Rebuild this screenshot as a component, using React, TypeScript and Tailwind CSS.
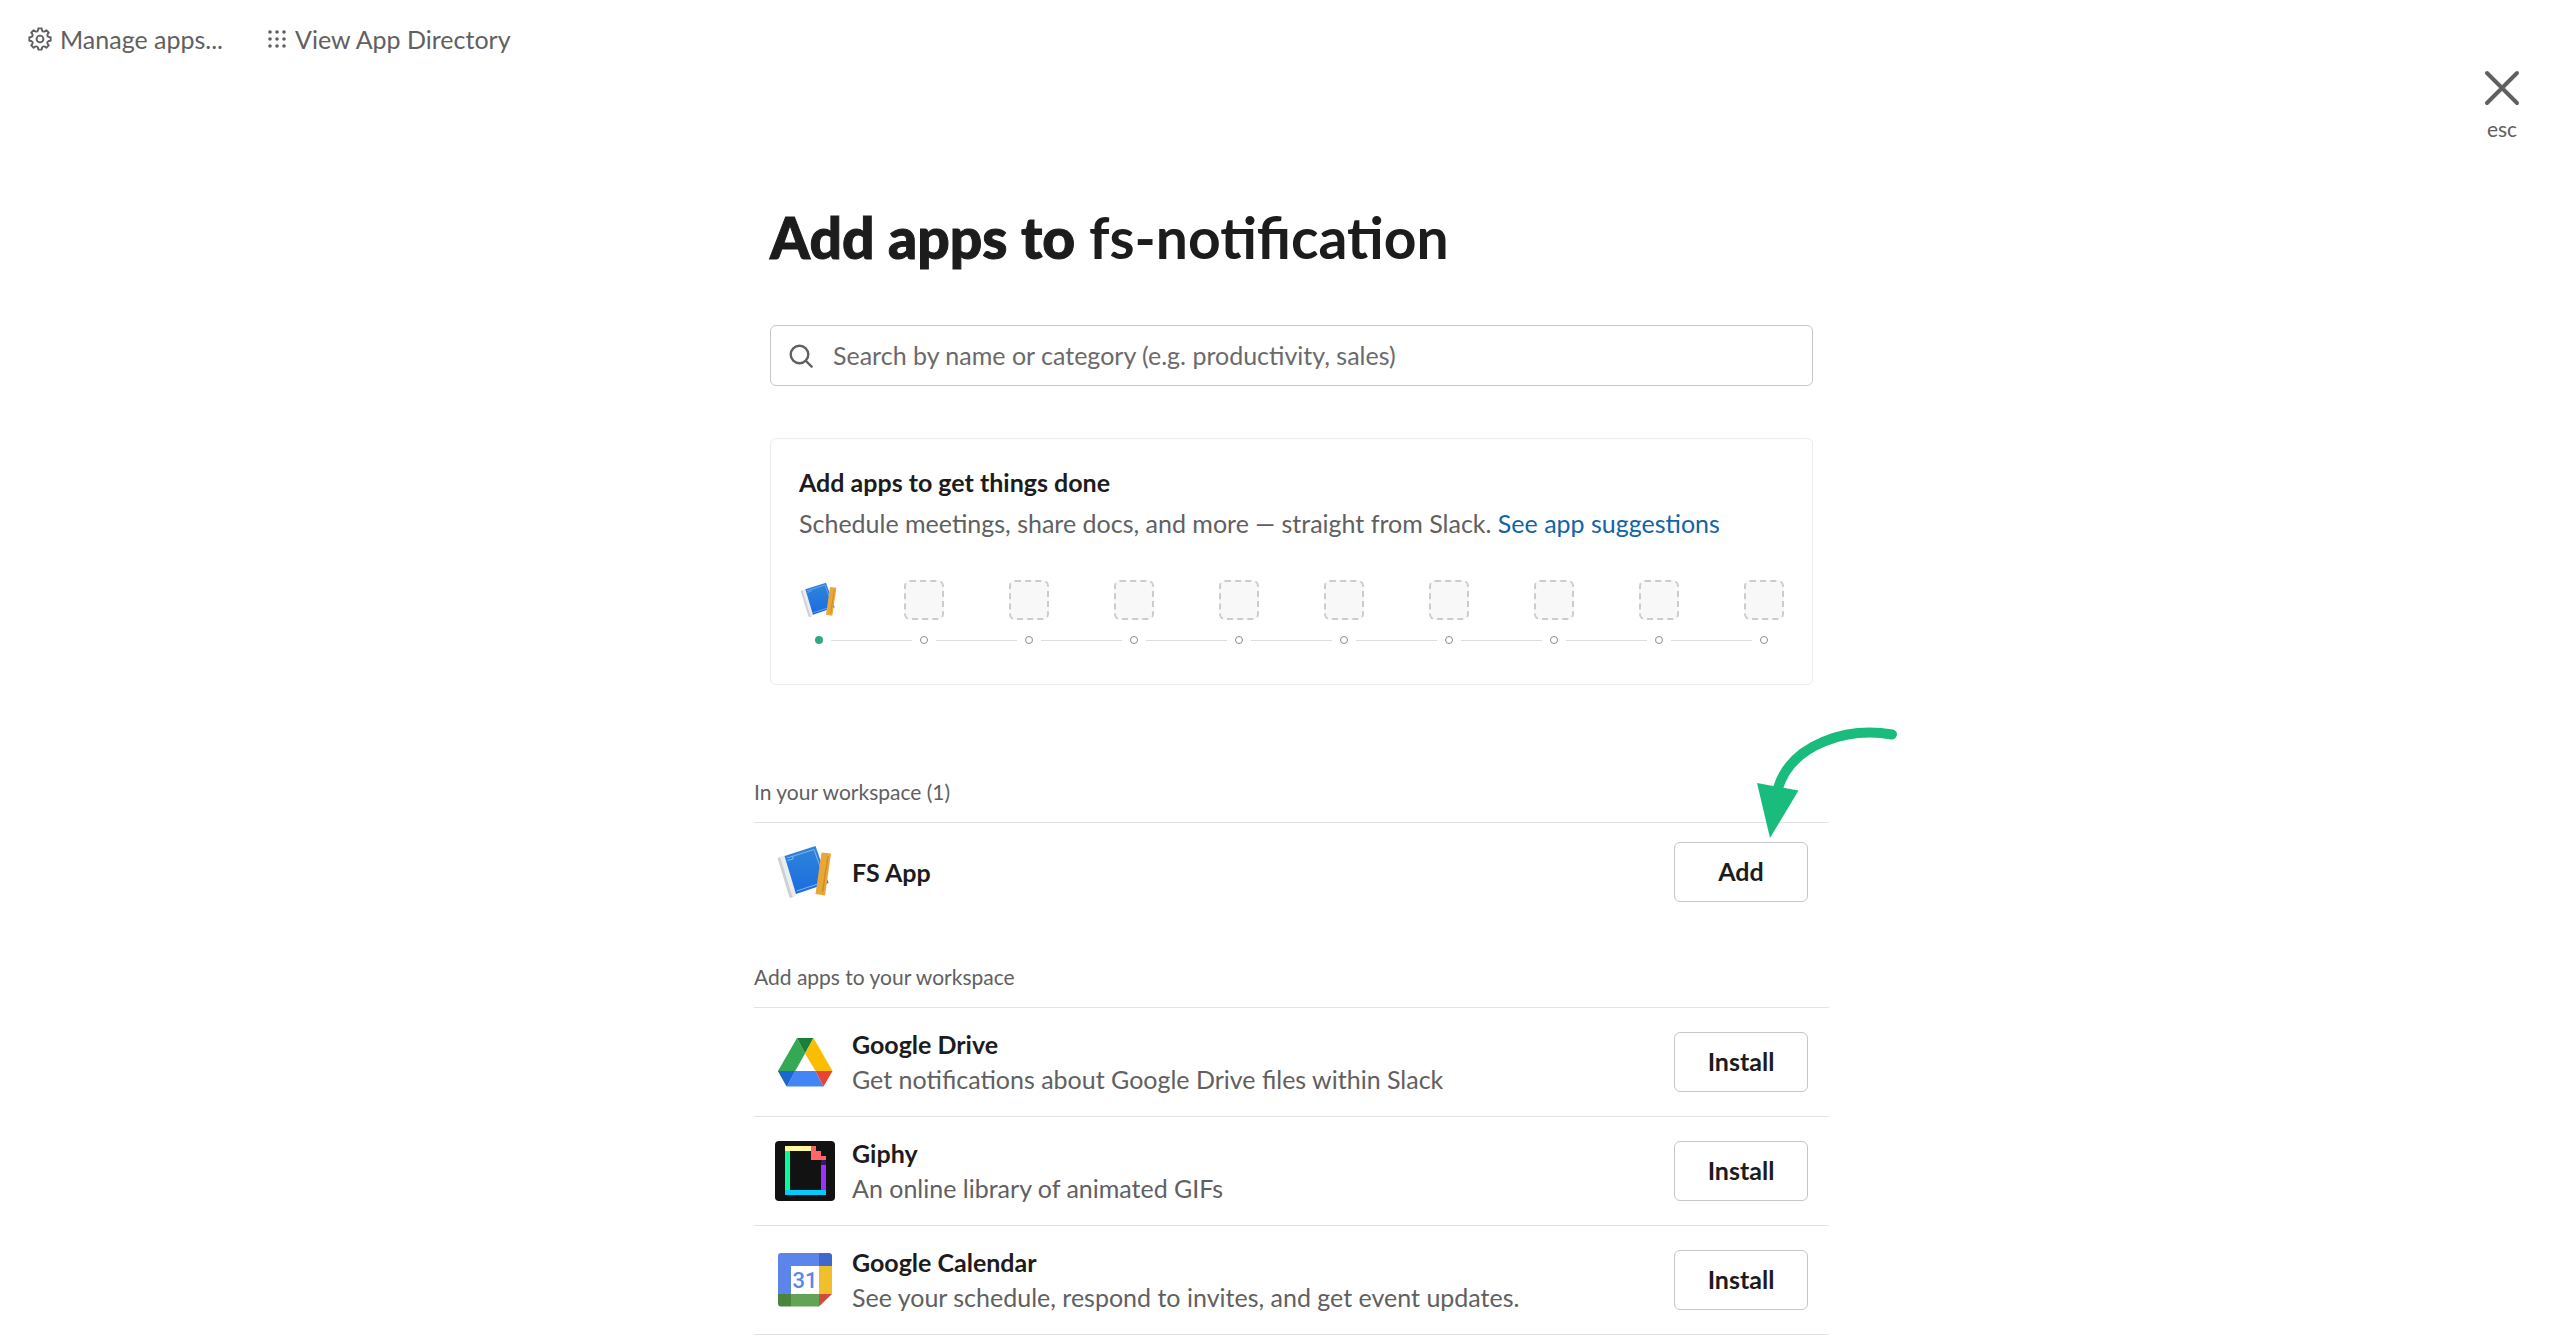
import React, { useState } from 'react';

interface AppEntry {
  name: string;
  description?: string;
  action: string;
  icon: React.ReactNode;
}

const EMPTY_SLOTS = 9;

// Outline of a cog with eight rounded teeth, centred on 12,12
const cogPath = () => {
  const point = (radius: number, degrees: number) => {
    const angle = (degrees * Math.PI) / 180;
    return `${(12 + radius * Math.sin(angle)).toFixed(2)} ${(12 - radius * Math.cos(angle)).toFixed(2)}`;
  };
  const teeth = Array.from({ length: 8 }, (_, i) => {
    const a = i * 45;
    return `${point(10.8, a - 9)} L${point(10.8, a + 9)} L${point(8.9, a + 13)} Q${point(7.4, a + 22.5)} ${point(8.9, a + 32)}`;
  });
  return `M${teeth.join(' L')}Z`;
};

const GearIcon = () => (
  <svg className="h-6 w-6 shrink-0" viewBox="0 0 24 24" fill="none" stroke="currentColor" strokeWidth={1.9} strokeLinejoin="round">
    <path d={cogPath()} />
    <circle cx="12" cy="12" r="3.4" />
  </svg>
);

const GridIcon = () => (
  <svg className="h-5 w-5 shrink-0" viewBox="0 0 20 20" fill="currentColor">
    {[3, 10, 17].map((y) => [3, 10, 17].map((x) => <circle key={`${x}-${y}`} cx={x} cy={y} r="1.8" />))}
  </svg>
);

const CloseIcon = () => (
  <svg className="h-9 w-9" viewBox="0 0 36 36" fill="none" stroke="currentColor" strokeWidth={4} strokeLinecap="round">
    <path d="M3 3l30 30M33 3L3 33" />
  </svg>
);

const SearchIcon = () => (
  <svg className="h-6 w-6 shrink-0" viewBox="0 0 24 24" fill="none" stroke="currentColor" strokeWidth={2.4} strokeLinecap="round">
    <circle cx="10.5" cy="10.5" r="8.8" />
    <path d="M17 17l5.600 5.600" />
  </svg>
);

const FsAppIcon = ({ className }: { className: string }) => (
  <svg className={className} viewBox="0 0 60 60">
    <defs>
      <linearGradient id="book" x1="0" y1="0" x2="0" y2="1">
        <stop offset="0" stopColor="#2f86da" />
        <stop offset="1" stopColor="#1b6be0" />
      </linearGradient>
    </defs>
    <path d="M2.500 16L6 14.500 19.500 54l-3.500 2q-1.500 0-2-2z" fill="#cfd0d3" />
    <path d="M5 15l5-1.500L22 52l-4.500 3z" fill="#ececee" />
    <path d="M9.500 14L40.500 4l13 37L21 52z" fill="url(#book)" />
    <path d="M12 16L39 7.500l11.500 32L21.500 49" fill="none" stroke="#7db8f2" strokeWidth="1" />
    <path d="M12.500 18.500l5.500-1.500v-3" fill="none" stroke="#7db8f2" strokeWidth="1" />
    <path d="M46.500 10.500l9.500 1-6 42-9.500-1.500z" fill="#eaa636" />
    <path d="M53 14l-5.500 36" stroke="#cf8e2a" strokeWidth="1.500" />
  </svg>
);

const DriveIcon = () => (
  <svg className="h-15 w-15" viewBox="0 0 60 60">
    <path d="M22 6L3 39l8.500 15.500L30 21.500z" fill="#34a853" />
    <path d="M22 6h16.500L30 21.500z" fill="#188038" />
    <path d="M38.500 6L57.500 39H40.500L30 21.500z" fill="#fbbc04" />
    <path d="M3 39h17l-8 15.500z" fill="#1967d2" />
    <path d="M20 39h20.500l8 15.500H12z" fill="#4285f4" />
    <path d="M40.500 39h17l-9 15.500z" fill="#ea4335" />
  </svg>
);

const GiphyIcon = () => (
  <svg className="h-15 w-15" viewBox="0 0 60 60" shapeRendering="crispEdges">
    <rect width="60" height="60" rx="4" fill="#121212" shapeRendering="auto" />
    <rect x="10" y="5" width="26" height="5" fill="#fff99d" />
    <rect x="10" y="10" width="5" height="39" fill="#00ff99" />
    <rect x="46" y="19" width="5" height="30" fill="#9933ff" />
    <rect x="46" y="19" width="5" height="5" fill="#3a1568" />
    <rect x="10" y="49" width="41" height="5" fill="#00ccff" />
    <path d="M36 5h5v5h5v5h5v4H36z" fill="#ff6666" />
  </svg>
);

const CalendarIcon = () => (
  <svg className="h-15 w-15" viewBox="0 0 60 60">
    <path d="M6 3h38v13H16v28H3V6q0-3 3-3z" fill="#5c85ec" />
    <path d="M44 3h10q3 0 3 3v10H44z" fill="#3f67ce" />
    <path d="M16 16h28v28H16z" fill="#fff" />
    <path d="M44 16h13v28H44z" fill="#f2bf2c" />
    <path d="M16 44h28v12.500H16z" fill="#61a455" />
    <path d="M3 44h13v12.500H6q-3 0-3-3z" fill="#4a8540" />
    <path d="M44 44h13L44 56.500z" fill="#cf4b3c" />
    <text x="30" y="38" textAnchor="middle" fontSize="22" fontWeight="500" fill="#5c85ec" fontFamily="Roboto, sans-serif">31</text>
  </svg>
);

const ArrowPointer = () => (
  <svg className="pointer-events-none absolute -top-[121px] left-[76px] h-[120px] w-[150px]" viewBox="0 0 150 120">
    <path d="M142 13.500C98 6 42 22 28 67" fill="none" stroke="#1abc7d" strokeWidth={10} strokeLinecap="round" />
    <path d="M7 62l41.500 7.500L20 117z" fill="#1abc7d" />
  </svg>
);

const workspaceApps: AppEntry[] = [
  { name: 'FS App', action: 'Add', icon: <FsAppIcon className="h-15 w-15" /> },
];

const availableApps: AppEntry[] = [
  {
    name: 'Google Drive',
    description: 'Get notifications about Google Drive files within Slack',
    action: 'Install',
    icon: <DriveIcon />,
  },
  { name: 'Giphy', description: 'An online library of animated GIFs', action: 'Install', icon: <GiphyIcon /> },
  {
    name: 'Google Calendar',
    description: 'See your schedule, respond to invites, and get event updates.',
    action: 'Install',
    icon: <CalendarIcon />,
  },
];

const AppRow = ({ app, pointed }: { app: AppEntry; pointed?: boolean }) => (
  <li className="flex items-center py-[19px] pr-[21px] pl-[21px]">
    <div className="shrink-0">{app.icon}</div>
    <div className="ml-[17px] min-w-0 flex-1">
      <h3 className="text-[25px] leading-[35px] font-bold text-[#1d1c1d]">{app.name}</h3>
      {app.description && <p className="text-[25px] leading-[35px]">{app.description}</p>}
    </div>
    <div className="relative shrink-0">
      <button
        type="button"
        className="block h-15 w-[134px] rounded-md border border-[#c6c6c6] bg-white text-[25px] font-bold text-[#1d1c1d] hover:bg-gray-50"
      >
        {app.action}
      </button>
      {pointed && <ArrowPointer />}
    </div>
  </li>
);

const App: React.FC = () => {
  const [query, setQuery] = useState('');

  return (
    <div className="min-h-screen bg-white font-['Lato',sans-serif] text-[#616061]">
      <header className="flex items-start justify-between pr-8 pl-7">
        <nav className="flex gap-11 pt-[19px] text-[25px] leading-10">
          <a href="#manage" className="flex items-center gap-2">
            <GearIcon />
            Manage apps...
          </a>
          <a href="#directory" className="flex items-center gap-2">
            <GridIcon />
            View App Directory
          </a>
        </nav>
        <button type="button" className="flex flex-col items-center gap-[11px] px-2 pt-[70px]">
          <CloseIcon />
          <span className="text-[21px] leading-6">esc</span>
        </button>
      </header>

      <main className="pl-[23px]">
        <div className="mx-auto max-w-[1075px]">
          <div className="px-4">
            <h1 className="pt-[61px] text-[57px] leading-[70px] font-bold text-[#1d1c1d]">
              <span className="font-black [-webkit-text-stroke:1px_#1d1c1d]">Add apps to</span> fs-notification
            </h1>

            <label className="mt-[53px] flex h-[61px] items-center gap-5 rounded-md border border-[#c6c6c6] px-4.5">
              <SearchIcon />
              <input
                type="text"
                aria-label="Search apps"
                value={query}
                onChange={(e) => setQuery(e.target.value)}
                placeholder="Search by name or category (e.g. productivity, sales)"
                className="min-w-0 flex-1 bg-transparent text-[25px] outline-none placeholder:text-[#6b6a6b]"
              />
            </label>

            <section className="mt-[52px] rounded-md border border-[#ececec] px-7 pt-[23px] pb-10">
              <h2 className="text-[25px] leading-[41px] font-bold text-[#1d1c1d]">Add apps to get things done</h2>
              <p className="text-[25px] leading-[41px]">
                Schedule meetings, share docs, and more — straight from Slack.{' '}
                <a href="#suggestions" className="text-[#1264a3]">See app suggestions</a>
              </p>
              <div className="mt-9 flex justify-between">
                <FsAppIcon className="h-10 w-10" />
                {Array.from({ length: EMPTY_SLOTS }, (_, i) => (
                  <div key={i} className="h-10 w-10 rounded-md border-2 border-dashed border-[#cccccc] bg-[#f8f8f8]" />
                ))}
              </div>
              <div className="mt-4 flex items-center gap-2 px-4">
                <span className="h-2 w-2 shrink-0 rounded-full bg-[#2eaa7c]" />
                {Array.from({ length: EMPTY_SLOTS }, (_, i) => (
                  <React.Fragment key={i}>
                    <span className="h-px flex-1 bg-[#dddddd]" />
                    <span className="h-2 w-2 shrink-0 rounded-full border border-[#8d8d8d]" />
                  </React.Fragment>
                ))}
              </div>
            </section>
          </div>

          <section className="mt-[89px]">
            <h2 className="pb-3 text-[21px] leading-9">In your workspace (1)</h2>
            <ul className="border-t border-[#e3e3e3]">
              {workspaceApps.map((app) => (
                <AppRow key={app.name} app={app} pointed />
              ))}
            </ul>
          </section>

          <section className="mt-[38px]">
            <h2 className="pb-3 text-[21px] leading-9">Add apps to your workspace</h2>
            <ul className="divide-y divide-[#e3e3e3] border-y border-[#e3e3e3]">
              {availableApps.map((app) => (
                <AppRow key={app.name} app={app} />
              ))}
            </ul>
          </section>
        </div>
      </main>
    </div>
  );
};

export default App;
